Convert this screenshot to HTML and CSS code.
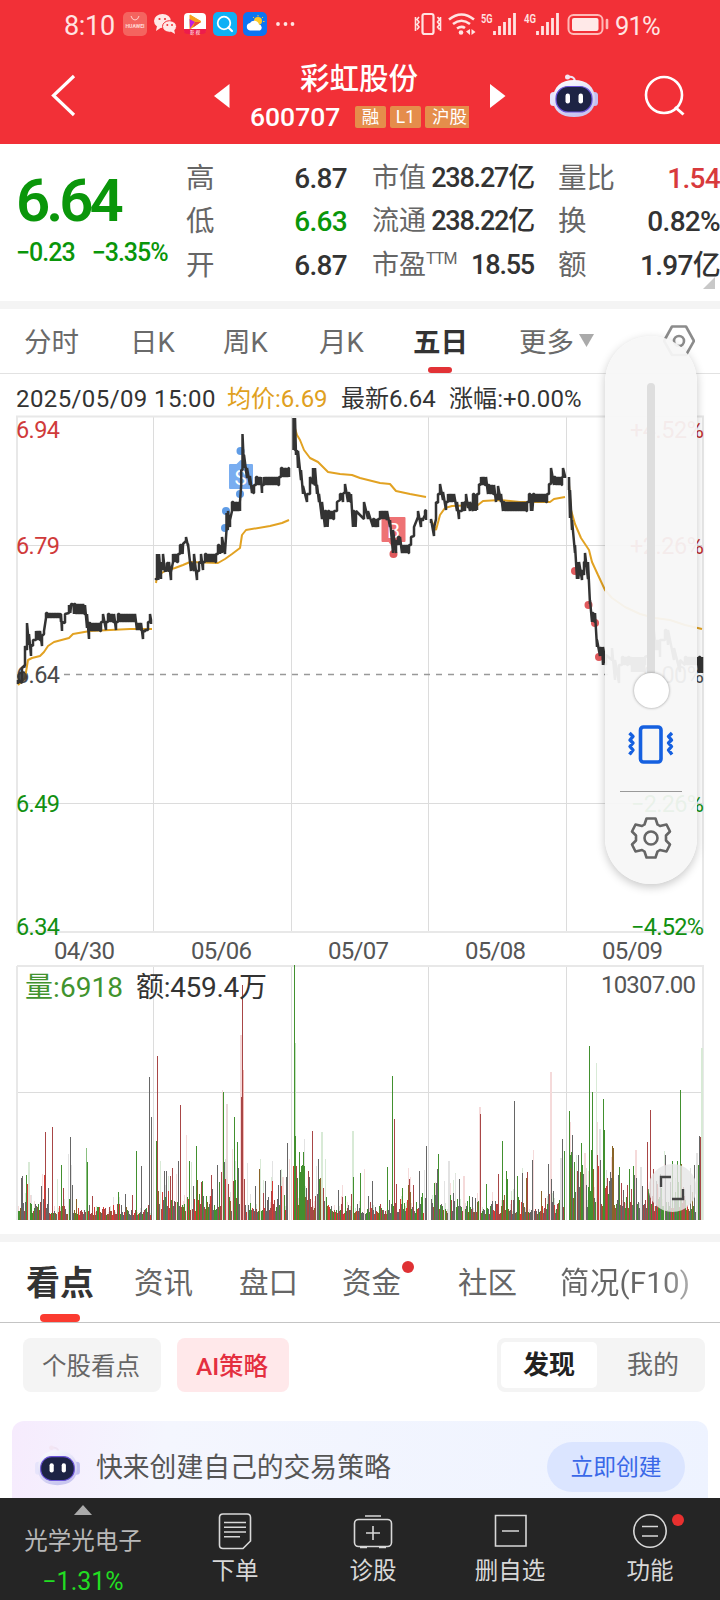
FILE: index.html
```html
<!DOCTYPE html>
<html lang="zh-CN">
<head>
  <meta charset="UTF-8">
  <title>彩虹股份 600707</title>
  <link rel="stylesheet" href="styles.css">
</head>
<body>
  <svg class="defs" width="0" height="0">
    <defs>
      <linearGradient id="shell" x1="0" y1="0" x2="0.4" y2="1">
        <stop offset="0" stop-color="#ffffff"/>
        <stop offset="1" stop-color="#c9c6f0"/>
      </linearGradient>
      <symbol id="robot" viewBox="0 0 48 46">
        <path d="M18 4 Q24 3 25 8" fill="none" stroke="#efe3f3" stroke-width="2"/>
        <circle cx="17.500" cy="4" r="2.500" fill="#f3e6f3"/>
        <rect x="0" y="19" width="7" height="14" rx="3.500" fill="#e6e4fb"/>
        <rect x="41" y="19" width="7" height="14" rx="3.500" fill="#c3c0f2"/>
        <path d="M24 7 C37 7 45 14 45 26 C45 38 37 44 24 44 C11 44 3 38 3 26 C3 14 11 7 24 7Z" fill="url(#shell)"/>
        <rect x="6" y="13.500" width="36" height="25.500" rx="12" fill="#1d2344" stroke="#6a52d8" stroke-width="1.200"/>
        <rect x="15.500" y="20.500" width="4.500" height="10" rx="2.200" fill="#fff"/>
        <rect x="28.500" y="20.500" width="4.500" height="10" rx="2.200" fill="#fff"/>
      </symbol>
    </defs>
  </svg>

  <header class="top">
    <div class="status">
      <span class="clock">8:10</span>
      <svg width="174" height="26" viewBox="121 11 174 26">
        <rect x="123" y="12" width="24" height="24" rx="5" fill="#f4645f"/>
        <path d="M131 16 Q132 20 135 20 Q138 20 139 16" fill="none" stroke="#ffd0cc" stroke-width="1"/>
        <text x="125.500" y="28" font-size="5" font-weight="700" textLength="19" lengthAdjust="spacingAndGlyphs" fill="#ffd9d6">HUAWEI</text>
        <ellipse cx="162.500" cy="21" rx="8.500" ry="7" fill="#ffe9e7"/>
        <path d="M157 26 L156 31 L162 27Z" fill="#ffe9e7"/>
        <ellipse cx="169.500" cy="26.500" rx="7" ry="5.800" fill="#ffe9e7" stroke="#f23037" stroke-width="1"/>
        <path d="M170 31 L175 34 L174 29Z" fill="#ffe9e7"/>
        <g fill="#f23037"><circle cx="159.500" cy="19" r="1.100"/><circle cx="165" cy="19" r="1.100"/><circle cx="167.300" cy="25" r="1"/><circle cx="172" cy="25" r="1"/></g>
        <rect x="184" y="13" width="22" height="20" rx="4" fill="#fff"/>
        <path d="M184 29 h22 v2 q0 3 -4 3 h-14 q-4 0 -4 -3Z" fill="#ed1c4b"/>
        <path d="M190 15 L201 21.500 L190 29Z" fill="#f8a11b" stroke="#f8a11b" stroke-linejoin="round"/>
        <path d="M189.500 19 L195 22 L190 28.500Z" fill="#c01ee0"/><path d="M195 22 l6 0 -8 5.500Z" fill="#ee4a33"/>
        <text x="190" y="33.500" font-size="4.500" textLength="10" fill="#fff">影视</text>
        <rect x="213" y="12" width="24" height="24" rx="5" fill="#0fb0f5"/>
        <circle cx="224" cy="23" r="6.300" fill="none" stroke="#fff" stroke-width="1.800"/>
        <path d="M228.500 27.500 L232 31" stroke="#fff" stroke-width="2.200" stroke-linecap="round"/>
        <rect x="243" y="12" width="24" height="24" rx="5" fill="#0c74f2"/>
        <circle cx="258" cy="21" r="4" fill="#ffc928"/>
        <path d="M258 15 v1.500 M263 17 l-1 1 M264.500 21.500 h-1.500 M253 17 l1 1" stroke="#ffc928"/>
        <path d="M250 30.500 a3.800 3.800 0 0 1 0 -7.500 a5 5 0 0 1 9 1.500 a3.200 3.200 0 0 1 1 6Z" fill="#fff"/>
        <g fill="#ffe4e2"><circle cx="278" cy="24" r="1.900"/><circle cx="285.500" cy="24" r="1.900"/><circle cx="292.500" cy="24" r="1.900"/></g>
      </svg>
      <svg class="signals" width="200" height="26" viewBox="412 11 200 26">
        <g fill="none" stroke="#ffe4e2" stroke-width="2.200">
          <rect x="422.500" y="14" width="11" height="20" rx="2"/>
          <path d="M419 17 l-2 2.500 2 2.500 -2 2.500 2 2.500 -2 2.500 M415.500 17 v14 M437.500 17 l2 2.500 -2 2.500 2 2.500 -2 2.500 2 2.500 M440.500 17 v14" stroke-width="1.600"/>
          <path d="M449 19.500 Q461.500 9.500 474 19.500 M453 24 Q461.500 17.500 470 24 M457 28.500 Q461.500 25.500 465 28" stroke-width="2.600"/>
          <rect x="568.500" y="15" width="34" height="19" rx="5" stroke="#ffb9b7" stroke-width="2"/>
        </g>
        <circle cx="461" cy="32.500" r="2.300" fill="#ffe4e2"/>
        <path d="M470 29 v6 l-4 -3.500Z M471.500 29 v6 l4 -3Z" fill="#ffe4e2"/>
        <text x="481" y="23" font-size="13" font-weight="600" textLength="11.500" lengthAdjust="spacingAndGlyphs" fill="#ffe4e2">5G</text>
        <text x="524" y="23" font-size="13" font-weight="600" textLength="12" lengthAdjust="spacingAndGlyphs" fill="#ffe4e2">4G</text>
        <path d="M494.500 35 v-4 M499.500 35 v-9 M504.500 35 v-13 M509.500 35 v-17 M514.500 35 v-22 M537.500 35 v-4 M542.500 35 v-9 M547.500 35 v-13 M552.500 35 v-17 M557.500 35 v-22" stroke="#ffe4e2" stroke-width="2.800"/>
        <rect x="572" y="18" width="26.500" height="13" rx="2" fill="#ffe9e8"/>
        <path d="M607 20 v8" stroke="#ffb9b7" stroke-width="2.600" stroke-linecap="round"/>
      </svg>
      <span class="battery">91%</span>
    </div>
    <div class="nav">
      <svg class="nav-back" width="30" height="48" viewBox="48 71 30 48"><path d="M74 75 L53.500 94.500 L74 114" fill="none" stroke="#fff" stroke-width="3.200"/></svg>
      <svg class="nav-prev" width="16" height="24" viewBox="0 0 16 24"><path d="M15.500 0 V24 L0 12Z" fill="#fff"/></svg>
      <div class="nav-title">
        <h1>彩虹股份</h1>
        <div class="code"><span class="code-num">600707</span><i>融</i><i>L1</i><i class="cut">沪股</i></div>
      </div>
      <svg class="nav-next" width="16" height="24" viewBox="0 0 16 24"><path d="M0 0 V24 L15.500 12Z" fill="#fff"/></svg>
      <svg class="nav-robot" width="48" height="46"><use href="#robot"/></svg>
      <svg class="nav-search" width="42" height="42" viewBox="643 75 42 42"><circle cx="663" cy="95" r="18" fill="none" stroke="#fff" stroke-width="2.600"/><path d="M674 107 L682.500 114.500" stroke="#fff" stroke-width="3"/></svg>
    </div>
  </header>

  <section class="quote">
    <div class="price">
      <div class="last">6.64</div>
      <div class="change"><span>−0.23</span><span>−3.35%</span></div>
    </div>
    <dl>
      <dt>高</dt><dd>6.87</dd>
      <dt>低</dt><dd class="green">6.63</dd>
      <dt>开</dt><dd>6.87</dd>
    </dl>
    <dl class="mid">
      <dt>市值</dt><dd>238.27亿</dd>
      <dt>流通</dt><dd>238.22亿</dd>
      <dt>市盈<sup>TTM</sup></dt><dd>18.55</dd>
    </dl>
    <dl class="last-col">
      <dt>量比</dt><dd class="red">1.54</dd>
      <dt>换</dt><dd>0.82%</dd>
      <dt>额</dt><dd>1.97亿</dd>
    </dl>
    <svg class="corner" width="12" height="12"><path d="M12 0 V12 H0Z" fill="#c8c8c8"/></svg>
  </section>

  <nav class="periods">
    <span>分时</span><span>日K</span><span>周K</span><span>月K</span><span class="on">五日</span>
    <span>更多<svg width="16" height="13"><path d="M0 0 H15 L7.500 13Z" fill="#aaa"/></svg></span>
    <svg width="32" height="32" viewBox="664 325 32 32" fill="none" stroke="#8c8c8c" stroke-width="2.600"><path d="M673 326.500 H687 L695 341 L687 355 H673 L665 341Z" stroke-linejoin="round"/><circle cx="680" cy="341" r="5"/></svg>
  </nav>

  <section class="chart">
    <p class="info"><span class="t1">2025/05/09 15:00</span><span class="t2">均价:6.69</span><span class="t3">最新6.64</span><span class="t4">涨幅:+0.00%</span></p>
    <svg id="chart" width="720" height="819" viewBox="0 415 720 819">
      <g fill="none" stroke="#dcdcdc" stroke-width="1">
        <path d="M153.500 417 V932 M291.500 417 V932 M428.500 417 V932 M566.500 417 V932 M17 545.500 H703 M17 803.500 H703"/>
        <path d="M153.500 966 V1220 M291.500 966 V1220 M428.500 966 V1220 M566.500 966 V1220 M17 1092.500 H703"/>
        <path d="M17 416.500 H703 V932 H17Z M17 966 H703 V1220 M17 966 V1220" stroke="#e8e8e8" stroke-width="2"/>
      </g>
      <path d="M64 674.500 H608" stroke="#999" stroke-width="1.500" stroke-dasharray="6 6"/>
      <g class="axis">
        <text x="16" y="438" textLength="44" fill="#d03a3a">6.94</text>
        <text x="16" y="554" textLength="44" fill="#d03a3a">6.79</text>
        <text x="16" y="683" textLength="44" fill="#4a4a4a">6.64</text>
        <text x="16" y="812" textLength="44" fill="#119011">6.49</text>
        <text x="16" y="935" textLength="44" fill="#119011">6.34</text>
        <text x="630" y="438" textLength="74" fill="#c03030">+4.52%</text>
        <text x="630" y="554" textLength="74" fill="#c03030">+2.26%</text>
        <text x="643" y="683" textLength="61" fill="#4a4a4a">0.00%</text>
        <text x="631" y="812" textLength="73" fill="#119011">−2.26%</text>
        <text x="631" y="935" textLength="73" fill="#119011">−4.52%</text>
      </g>
      <g class="dates">
        <text x="54" y="959" textLength="61">04/30</text>
        <text x="191" y="959" textLength="61">05/06</text>
        <text x="328" y="959" textLength="61">05/07</text>
        <text x="465" y="959" textLength="61">05/08</text>
        <text x="602" y="959" textLength="61">05/09</text>
      </g>
      <g id="bars" shape-rendering="crispEdges"></g>
      <g class="vol-text">
        <text x="25" y="997" textLength="98" fill="#41932e">量:6918</text>
        <text x="136" y="997" textLength="131" fill="#333">额:459.4万</text>
        <text class="max" x="601" y="993" textLength="95">10307.00</text>
      </g>
      <g fill="#5f9ce6"><circle cx="240.500" cy="451" r="4"/><circle cx="240" cy="494" r="4"/><circle cx="226" cy="511" r="4"/><circle cx="225" cy="528" r="4"/></g>
      <g fill="#e0595c"><circle cx="393.500" cy="554" r="4"/><circle cx="575" cy="571" r="4"/><circle cx="588.500" cy="605" r="4"/><circle cx="595" cy="623" r="4"/><circle cx="599" cy="657" r="4"/></g>
      <path d="M230 465 H237 L241 461 L245 465 H252 V488 H230Z" fill="#79adf0" stroke="#79adf0" stroke-width="2" stroke-linejoin="round"/>
      <path d="M382.500 518 H404.500 V541 H395 L392 545 L389 541 H382.500Z" fill="#ee7274" stroke="#ee7274" stroke-width="2" stroke-linejoin="round"/>
      <text x="234.500" y="484.500" font-size="21" fill="#fff">S</text>
      <text x="387" y="537.500" font-size="21" fill="#fff">B</text>
      <g id="lines" fill="none"></g>
      <circle cx="22" cy="676.500" r="5" fill="#333" fill-opacity=".85"/>
      <circle cx="672.500" cy="1188" r="24" fill="#e6e6e6" fill-opacity=".82"/>
      <path d="M661 1187 V1177 H671 M672 1199 H683 V1189" fill="none" stroke="#444" stroke-width="2.400"/>
    </svg>
  </section>

  <nav class="tabs">
    <span class="on">看点</span><span>资讯</span><span>盘口</span><span class="dot">资金</span><span>社区</span><span class="fade">简况(F10)</span>
  </nav>

  <section class="feed">
    <div class="filters">
      <span class="chip">个股看点</span>
      <span class="chip ai">AI策略</span>
      <div class="switch"><b>发现</b><span>我的</span></div>
    </div>
    <div class="card">
      <svg width="45" height="43"><use href="#robot"/></svg>
      <p>快来创建自己的交易策略</p>
      <a>立即创建</a>
    </div>
  </section>

  <footer class="bar">
    <div class="index">
      <svg width="18" height="10"><path d="M0 10 L9 0 L18 10Z" fill="#aaa"/></svg>
      <span>光学光电子</span>
      <em>−1.31%</em>
    </div>
    <div class="item">
      <svg width="38" height="38" viewBox="216 1512 38 38"><path d="M223 1514 H247 Q250.500 1514 250.500 1517.500 V1541 L243 1548.500 H223 Q219.500 1548.500 219.500 1545 V1517.500 Q219.500 1514 223 1514Z M224 1522.500 H246 M224 1527.300 H246 M224 1532 H246 M224 1536.800 H240"/></svg>
      <span>下单</span>
    </div>
    <div class="item">
      <svg width="42" height="38" viewBox="352 1512 42 38"><rect x="354.500" y="1519.500" width="37" height="27" rx="4"/><path d="M365 1516 H381 M373 1526 V1540 M366 1533 H380 M360 1547.500 H367 M379 1547.500 H386"/></svg>
      <span>诊股</span>
    </div>
    <div class="item">
      <svg width="38" height="38" viewBox="491 1512 38 38"><path d="M495.500 1515.500 H526 V1546 H495.500Z M502 1531 H519"/></svg>
      <span>删自选</span>
    </div>
    <div class="item hot">
      <svg width="38" height="38" viewBox="631 1512 38 38"><circle cx="650" cy="1531" r="16.200"/><path d="M642 1526.500 H658 M642 1536 H658"/></svg>
      <span>功能</span>
    </div>
  </footer>

  <aside class="volume">
    <div class="track"></div>
    <div class="knob"></div>
    <svg class="vibrate" width="48" height="40" viewBox="0 0 48 40" fill="none" stroke="#1560e0"><rect x="13.500" y="2" width="20.500" height="35" rx="3" stroke-width="3.600"/><path d="M2.500 8 l3.500 3.500 -3 3.500 3 3 -3 3.500 3 3.500 -3.500 4.500 M45 8 l-3.500 3.500 3 3.500 -3 3 3 3.500 -3 3.500 3.500 4.500" stroke-width="3.400" stroke-linejoin="round"/></svg>
    <hr>
    <svg width="42" height="44" viewBox="-21 -22 42 44" fill="none" stroke="#666" stroke-width="2.600" stroke-linejoin="round"><path d="M-4.500 -19.500 H4.500 L6.500 -13.500 L9 -12 L15.500 -13.500 L19 -6.500 L15 -2.500 V2.500 L19 6.500 L15.500 13.500 L9 12 L6.500 13.500 L4.500 19.500 H-4.500 L-6.500 13.500 L-9 12 L-15.500 13.500 L-19 6.500 L-15 2.500 V-2.500 L-19 -6.500 L-15.500 -13.500 L-9 -12 L-6.500 -13.500Z"/><circle r="6.500"/></svg>
  </aside>
  <script src="chart.js"></script>
</body>
</html>
```

FILE: styles.css
```css
* { box-sizing: border-box; }
body { margin: 0; width: 720px; height: 1600px; overflow: hidden; position: relative; background: #fff; color: #333; font-family: Roboto, "Noto Sans CJK SC", sans-serif; }
h1, p, dl, dd { margin: 0; }
svg { display: block; flex: none; }
.defs { position: absolute; }

.top { height: 144px; background: #f23037; color: #fff; }
.status { display: flex; align-items: center; height: 47px; padding: 1px 0 0 64px; color: #ffe4e2; }
.clock { width: 57px; font-size: 27px; line-height: 30px; letter-spacing: -.3px; padding-top: 3px; }
.signals { margin-left: 117px; }
.battery { margin-left: 3px; padding-top: 3px; font-size: 25.500px; line-height: 30px; letter-spacing: -.8px; }
.nav { display: flex; align-items: center; height: 97px; padding-left: 48px; }
.nav-prev { margin-left: 136px; }
.nav-title { width: 220px; margin: 0 0 0 21px; }
.nav-title h1 { margin-left: 49px; font-size: 29.500px; font-weight: 500; line-height: 34px; }
.nav-next { margin-left: 19px; }
.nav-robot { margin-left: 44px; }
.nav-search { margin-left: 46px; }
.code { display: flex; align-items: center; height: 24px; margin-top: 9px; gap: 4px; }
.code-num { width: 101px; margin-left: -1px; font-size: 26.500px; font-weight: 500; line-height: 26px; }
.code i { width: 31px; height: 22px; border-radius: 2px; background: #e58d4b; font-style: normal; font-size: 17.500px; line-height: 22px; text-align: center; }
.code i.cut { width: 44px; padding-left: 7px; border-radius: 2px 0 0 2px; overflow: hidden; white-space: nowrap; text-align: left; }

.quote { position: relative; display: flex; height: 165px; border-bottom: 8px solid #f4f4f4; padding-top: 13px; }
.price { width: 186px; padding: 11px 0 0 16px; color: #0a960a; }
.last { font-size: 60px; font-weight: 600; line-height: 66px; letter-spacing: -4px; }
.change { display: flex; gap: 17px; margin-top: 3px; font-size: 25px; line-height: 32px; letter-spacing: -1px; font-weight: 500; white-space: nowrap; }
dl { display: grid; grid-template-columns: 54px 1fr; grid-auto-rows: 43.300px; width: 161px; align-items: center; }
dl.mid { width: 162px; margin-left: 25px; }
dl.last-col { margin-left: 24px; width: 162px; }
dt { color: #666; font-size: 28.500px; line-height: 43px; white-space: nowrap; }
.mid dt { font-size: 27px; }
dt sup { font-size: 16px; line-height: 0; vertical-align: 10px; letter-spacing: -.8px; }
dd { text-align: right; font-size: 28px; font-weight: 500; line-height: 43px; letter-spacing: -.7px; white-space: nowrap; }
.mid dd { font-size: 27px; letter-spacing: -1.200px; }
.green { color: #0a960a; }
.red { color: #d83a3c; }
.corner { position: absolute; left: 703px; top: 133px; }

.periods { display: grid; grid-template-columns: 106px 93px 96px 94px 106px 144px auto; align-items: center; height: 65px; padding-left: 24px; border-bottom: 1px solid #e2e2e2; color: #6a6a6a; font-size: 27.500px; line-height: 60px; }
.periods span { display: flex; align-items: center; gap: 5px; height: 64px; padding-top: 4px; }
.periods span svg { margin-top: -5px; }
.periods .on { position: relative; color: #333; font-weight: 700; }
.periods .on::after { content: ""; position: absolute; left: 15px; bottom: 0; width: 24px; height: 6px; border-radius: 3px; background: #e23236; }

.chart { height: 868px; border-bottom: 8px solid #f4f4f4; }
.info { display: flex; height: 41px; padding: 4px 0 0 16px; font-size: 24px; line-height: 42px; white-space: nowrap; }
.info .t1 { width: 211px; letter-spacing: .4px; }
.info .t2 { width: 114px; color: #e0a020; }
.info .t3 { width: 108px; }
.info .t4 { letter-spacing: .1px; }
.axis { font-size: 23.500px; }
.dates { font-size: 24px; fill: #555; }
.vol-text { font-size: 28px; }
.vol-text .max { font-size: 24px; fill: #555; }

.tabs { display: grid; grid-template-columns: 108px 105px 103px 116px 102px auto; height: 81px; padding-left: 26px; border-bottom: 1px solid #c4c4c4; color: #666; font-size: 29.500px; line-height: 83px; white-space: nowrap; }
.tabs span { position: relative; height: 80px; }
.tabs .on { color: #333; font-size: 34px; font-weight: 700; }
.tabs .on::after { content: ""; position: absolute; left: 14px; bottom: 0; width: 40px; height: 8px; border-radius: 4px; background: #fb3b30; }
.tabs .dot::after { content: ""; position: absolute; left: 60px; top: 19px; width: 12px; height: 12px; border-radius: 50%; background: #df3134; }
.tabs .fade { width: 134px; letter-spacing: .2px; background: linear-gradient(90deg, #666 75%, #bbb 100%); -webkit-background-clip: text; background-clip: text; color: transparent; }

.feed { height: 175px; overflow: hidden; }
.filters { display: flex; gap: 16px; padding: 15px 15px 0 23px; }
.chip { width: 138px; height: 54px; padding-right: 2px; border-radius: 8px; background: #f4f4f4; color: #666; font-size: 24.500px; line-height: 58px; text-align: center; }
.chip.ai { width: 112px; background: #ffe8ea; color: #e42f40; font-weight: 500; }
.switch { display: flex; width: 208px; height: 54px; margin-left: auto; padding: 4px; border-radius: 8px; background: #f4f4f4; font-size: 26px; line-height: 46px; text-align: center; }
.switch b { width: 96px; border-radius: 5px; background: #fff; color: #222; }
.switch span { flex: 1; padding-left: 8px; color: #666; }
.card { display: flex; align-items: center; width: 696px; height: 100px; margin: 29px 0 0 12px; padding: 0 23px 8px 23px; border-radius: 12px; background: linear-gradient(100deg, #f6ebfd 0, #f4f6fe 22%, #eef3ff 100%); color: #555; }
.card svg { margin-bottom: 4px; }
.card p { margin: 0 0 3px 16px; font-size: 26.800px; }
.card a { width: 138px; height: 50px; margin-left: auto; border-radius: 25px; background: #dbe5ff; color: #3a68e8; font-size: 22.800px; line-height: 51px; text-align: center; }

.bar { display: grid; grid-template-columns: 166px 138px 138px 136px 144px; height: 102px; background: #252525; color: #d8d8d8; font-size: 23.500px; text-align: center; white-space: nowrap; }
.index { display: flex; flex-direction: column; align-items: center; padding-top: 7px; color: #b8b8b8; }
.index span { margin-top: 8px; line-height: 36px; }
.index em { margin-top: 5px; color: #22dd22; font-size: 25px; font-style: normal; line-height: 36px; }
.item { position: relative; display: flex; flex-direction: column; align-items: center; padding-top: 14px; }
.item svg { fill: none; stroke: #d8d8d8; stroke-width: 1.600; }
.item span { margin-top: 3px; line-height: 36px; }
.item.hot::after { content: ""; position: absolute; left: 94px; top: 16px; width: 12px; height: 12px; border-radius: 50%; background: #e8302f; }

/* system volume panel floats over the app */
.volume { position: absolute; left: 605px; top: 336px; width: 92px; height: 548px; padding-top: 47px; display: flex; flex-direction: column; align-items: center; border-radius: 46px; background: rgba(247, 247, 247, .94); box-shadow: 0 3px 10px rgba(0, 0, 0, .22); }
.track { width: 8px; height: 290px; border-radius: 4px 4px 0 0; background: #dedede; }
.knob { width: 35px; height: 35px; border-radius: 50%; background: #fff; box-shadow: 0 0 3px rgba(0, 0, 0, .4); }
.vibrate { margin-top: 17px; }
.volume hr { width: 62px; height: 1px; margin: 26px 0 24px; border: 0; background: #999; }
```

FILE: chart.js
```js
const NS = 'http://www.w3.org/2000/svg';

// [x, top, bottom] of the price range at that moment
const price = [
  [[18, 680, 684], [22, 668, 683], [25, 646, 665], [27, 623, 650], [29, 634, 645], [31, 645, 656], [33, 640, 646], [36, 631, 640], [40, 631, 640], [42, 636, 646], [44, 631, 634], [46, 613, 618], [61, 614, 622], [62, 622, 631], [65, 614, 623], [69, 605, 613], [71, 604, 606], [74, 604, 614], [85, 605, 614], [87, 614, 628], [89, 623, 639], [91, 623, 631], [101, 622, 631], [103, 614, 622], [106, 622, 630], [108, 614, 622], [114, 614, 622], [116, 622, 630], [118, 614, 622], [135, 614, 622], [137, 623, 630], [141, 623, 630], [143, 631, 639], [145, 630, 632], [148, 622, 630], [150, 614, 622], [151, 620, 624]],
  [[156, 578, 580], [157, 554, 580], [159, 554, 562], [161, 562, 579], [163, 554, 570], [165, 570, 572], [167, 563, 571], [169, 562, 572], [171, 572, 580], [173, 554, 562], [178, 554, 562], [180, 545, 554], [183, 544, 546], [186, 537, 541], [188, 544, 546], [191, 562, 571], [194, 554, 571], [197, 571, 580], [199, 562, 571], [201, 554, 563], [203, 562, 570], [205, 554, 562], [216, 554, 562], [218, 545, 554], [220, 545, 554], [222, 537, 553], [225, 552, 554], [226.5, 513, 530], [228, 511, 520], [230, 520, 527], [232, 502, 511], [237, 502, 511], [240, 502, 511], [241.2, 470, 485], [242.5, 434, 470], [244, 455, 468], [247, 468, 478], [250, 476, 485], [252, 485, 493], [254, 485, 493], [256, 477, 485], [261, 477, 485], [262, 485, 493], [264, 477, 485], [279, 477, 485], [281, 468, 477], [286, 468, 477], [289, 468, 477]],
  [[293.5, 418, 450], [295, 418, 450], [296, 451, 455], [298, 451, 468], [301, 470, 480], [303, 486, 494], [307, 494, 502], [310, 477, 494], [313, 468, 484], [315, 468, 485], [317, 485, 494], [319, 494, 502], [322, 502, 519], [325, 511, 527], [328, 511, 519], [334, 511, 519], [337, 502, 511], [340, 494, 500], [343, 494, 502], [345, 484, 492], [348, 493, 502], [351, 494, 502], [353, 511, 527], [356, 511, 519], [364, 502, 519], [368, 511, 519], [373, 519, 527], [378, 519, 527], [380, 511, 519], [387, 511, 520], [390, 520, 527], [393, 530, 553], [396, 540, 553], [398, 537, 545], [400, 537, 545], [402, 545, 553], [409, 545, 553], [411, 537, 545], [414, 527, 536], [418, 511, 517], [421, 519, 527], [423, 519, 521], [425, 511, 515], [426, 510, 520]],
  [[431, 519, 523], [434, 528, 536], [436, 502, 519], [438, 494, 503], [440, 484, 494], [443, 492, 500], [446, 502, 510], [448, 494, 502], [454, 494, 502], [457, 502, 511], [459, 511, 519], [462, 502, 511], [465, 502, 511], [466, 494, 502], [468, 502, 508], [470, 502, 511], [473, 494, 511], [477, 494, 510], [479, 484, 494], [481, 477, 485], [486, 477, 485], [488, 485, 494], [494, 485, 494], [496, 494, 502], [498, 486, 500], [501, 494, 502], [503, 502, 511], [527, 502, 511], [529, 494, 502], [531, 494, 511], [533, 494, 502], [547, 494, 502], [549, 484, 494], [551, 468, 484], [554, 477, 485], [562, 477, 485], [563, 468, 477], [565, 476, 478]],
  [[569, 477, 490], [570, 490, 518], [572, 520, 530], [575, 545, 553], [577, 562, 579], [579, 562, 572], [582, 570, 580], [584, 562, 575], [585, 553, 562], [588, 562, 579], [590, 600, 604], [592, 613, 622], [595, 613, 622], [597, 640, 647], [600, 648, 656], [603, 647, 665], [606, 655, 665], [612, 648, 660], [615, 660, 680], [619, 665, 683], [622, 657, 665], [628, 657, 665], [632, 657, 672], [645, 657, 665], [650, 645, 655], [653, 623, 640], [656, 640, 650], [660, 640, 657], [665, 630, 640], [668, 630, 645], [674, 648, 660], [680, 660, 672], [685, 657, 665], [697, 657, 665], [699, 657, 673], [702, 657, 673]]
];

const average = [
  '18,685 25,678 28,660 32,658 40,656 44,652 48,646 54,642 69,638 73,634 90,631 130,629 152,629',
  '156,583 157,576 165,571 175,568 183,565 190,562 218,563 225,559 232,554 240,548 242,535 246,530 270,526 282,523 289,520',
  '294,425 297,435 300,440 304,450 310,458 318,462 328,472 340,474 352,475 360,478 380,483 390,484 396,491 410,494 426,497',
  '431,520 436,530 440,515 445,508 452,506 478,505 483,501 500,500 520,502 550,502 554,499 565,497',
  '569,485 571,510 575,524 581,538 589,550 592,562 598,575 605,590 612,598 625,607 640,614 655,618 670,620 685,625 702,629'
];

function addLine(points, color, width) {
  const line = document.createElementNS(NS, 'polyline');
  line.setAttribute('points', points);
  line.setAttribute('stroke', color);
  line.setAttribute('stroke-width', width);
  line.setAttribute('stroke-linejoin', 'bevel');
  document.getElementById('lines').appendChild(line);
}

average.forEach(points => addLine(points, '#e2a222', 2));

price.forEach(day => {
  const points = [];
  let up = false;
  for (let i = 0; i < day.length - 1; i++) {
    const [x1, t1, b1] = day[i];
    const [x2, t2] = day[i + 1];
    points.push(x1 + ',' + b1, x1 + ',' + t1);
    // flat stretches flicker between two ticks
    if (Math.abs(t1 - t2) < 3) {
      for (let x = x1 + 1.3; x < x2; x += 1.3) {
        points.push(x.toFixed(1) + ',' + (up ? t1 : b1));
        up = !up;
      }
    }
  }
  const end = day[day.length - 1];
  points.push(end[0] + ',' + end[1], end[0] + ',' + end[2]);
  addLine(points.join(' '), '#333', 2.5);
});

// volume bars
const base = 1220;
const GRAY = '#666', RED = '#a84646', HOT = '#d63a34', GREEN = '#42902f', BROWN = '#8a6428';
const PALE_RED = '#f5dada', PALE_GREEN = '#d8ead6', PALE_GRAY = '#e2e2e2';

function bar(x, top, color, w) {
  const r = document.createElementNS(NS, 'rect');
  r.setAttribute('x', x);
  r.setAttribute('y', top);
  r.setAttribute('width', w || 1);
  r.setAttribute('height', base - top);
  r.setAttribute('fill', color);
  document.getElementById('bars').appendChild(r);
}

let seed = 77;
function rnd() {
  seed = (seed * 16807) % 2147483647;
  return seed / 2147483647;
}

// [from, to, typical height at start, in the middle, at the end]
const days = [[18, 151, 20, 8, 8], [156, 287, 26, 17, 18], [293, 426, 38, 8, 14], [431, 564, 20, 10, 14], [569, 700, 38, 22, 17]];
const tints = [GRAY, GRAY, GREEN, RED, HOT, GREEN, GRAY, RED, BROWN];
days.forEach(([from, to, a, m, b]) => {
  for (let x = from; x <= to; x++) {
    const f = (x - from) / (to - from);
    const mean = f < .5 ? a + (m - a) * Math.sqrt(f * 2) : m + (b - m) * (f - .5) * 2;
    const h = Math.min(65, 2 + mean * .35 + mean * -Math.log(1 - rnd() * .98) * .65);
    if (rnd() < .22) bar(x, base - Math.round(h * 1.5), [PALE_RED, PALE_GREEN, PALE_GRAY][Math.floor(rnd() * 3)]);
    bar(x, base - Math.round(h), tints[Math.floor(rnd() * tints.length)]);
  }
});

const spikes = [
  [28, 1162, PALE_GREEN, 2], [21, 1178, GRAY], [22, 1176, GRAY], [26, 1175, GREEN], [27, 1184, HOT], [42, 1174, PALE_RED], [41, 1186, GRAY], [44, 1175, HOT], [45, 1132, RED], [52, 1127, RED], [57, 1179, PALE_GREEN], [61, 1165, GREEN], [63, 1188, RED], [68, 1154, PALE_GRAY], [70, 1137, GRAY], [71, 1165, PALE_GRAY], [72, 1185, GRAY], [86, 1148, '#8ac080'], [87, 1162, GREEN], [92, 1196, RED], [118, 1192, GREEN], [125, 1194, GRAY], [136, 1151, GREEN], [141, 1166, GRAY], [149, 1077, GRAY], [151, 1117, GRAY],
  [156, 1141, GREEN], [157, 1056, RED], [160, 1161, PALE_GREEN], [166, 1171, GRAY], [172, 1168, RED], [176, 1174, PALE_RED], [180, 1105, RED], [186, 1135, PALE_RED], [189, 1161, GREEN], [191, 1162, PALE_GREEN], [196, 1146, GREEN], [197, 1180, BROWN], [202, 1181, GREEN], [211, 1180, RED], [217, 1165, GRAY], [219, 1182, GREEN], [222, 1090, PALE_RED], [223, 1092, GREEN], [224, 1162, GRAY], [226, 1104, '#e8d8d8', 2], [232, 1149, PALE_RED], [234, 1117, GREEN], [237, 1142, GREEN], [238, 1168, GRAY], [240, 1035, PALE_RED, 2], [241, 1097, RED], [242, 985, RED], [243, 1070, '#f5bcb8'], [244, 1179, RED], [247, 1163, PALE_GRAY], [255, 1186, GRAY], [260, 1159, PALE_GREEN], [265, 1181, GRAY], [280, 1170, GRAY], [282, 1177, PALE_RED, 2], [287, 1143, GRAY], [289, 1159, PALE_RED],
  [293, 1166, HOT], [295, 1043, '#c3e4be'], [294, 965, GREEN], [295, 1136, GREEN], [297, 1178, GREEN], [299, 1152, GREEN], [300, 1172, GREEN], [301, 1166, GREEN], [302, 1165, GREEN], [303, 1152, GREEN], [308, 1171, RED], [312, 1131, RED], [316, 1166, PALE_GRAY], [318, 1159, GRAY], [319, 1179, GREEN], [321, 1132, PALE_GREEN, 2], [325, 1159, PALE_GREEN], [352, 1131, PALE_GREEN, 2], [353, 1177, GREEN], [360, 1173, GREEN], [364, 1169, PALE_RED], [372, 1181, GRAY], [387, 1167, GREEN], [392, 1076, GREEN], [394, 1119, RED], [396, 1184, RED], [402, 1188, GREEN], [409, 1179, RED], [413, 1185, RED], [419, 1171, GRAY], [424, 1170, PALE_GRAY], [426, 1146, GRAY],
  [434, 1183, GREEN], [438, 1154, GREEN], [444, 1181, PALE_GRAY], [448, 1161, PALE_GRAY, 2], [455, 1174, PALE_GRAY], [459, 1179, GRAY], [463, 1176, PALE_RED, 2], [479, 1107, PALE_RED, 2], [480, 1114, RED], [486, 1184, GREEN], [498, 1174, RED], [502, 1141, GREEN], [506, 1171, GREEN], [507, 1179, GREEN], [514, 1101, GRAY], [517, 1176, GREEN], [522, 1173, GRAY], [526, 1178, BROWN], [527, 1172, RED], [532, 1160, GRAY], [533, 1150, PALE_RED], [548, 1164, GRAY], [550, 1072, PALE_RED, 2], [551, 1179, GRAY], [560, 1158, PALE_GRAY, 2], [562, 1139, GRAY], [564, 1151, GREEN],
  [569, 1111, GREEN], [570, 1168, BROWN], [571, 1152, GREEN], [572, 1135, GRAY], [574, 1162, GREEN], [576, 1155, PALE_GREEN], [577, 1171, RED], [581, 1143, GREEN], [582, 1165, GREEN], [584, 1153, PALE_RED, 2], [589, 1046, GREEN], [591, 1150, GREEN], [592, 1092, GREEN], [593, 1169, BROWN], [596, 1063, PALE_GREEN], [599, 1129, PALE_GRAY, 2], [600, 1160, GRAY], [603, 1099, GREEN], [604, 1130, GREEN], [607, 1178, RED], [609, 1181, GRAY], [612, 1146, BROWN], [613, 1148, BROWN], [619, 1167, GREEN], [621, 1183, RED], [633, 1166, GREEN], [635, 1150, PALE_RED, 2], [636, 1178, GRAY], [640, 1167, PALE_GRAY, 2], [647, 1142, RED], [650, 1110, RED], [653, 1169, RED], [664, 1164, PALE_RED], [665, 1155, GRAY], [672, 1161, GREEN], [677, 1161, GREEN], [680, 1090, GREEN], [681, 1164, BROWN], [694, 1165, GRAY], [696, 1153, PALE_GRAY, 2], [698, 1165, GREEN], [699, 1136, GRAY], [700, 1137, RED], [701, 1048, PALE_GREEN, 2]
];
spikes.forEach(s => bar(...s));
```
